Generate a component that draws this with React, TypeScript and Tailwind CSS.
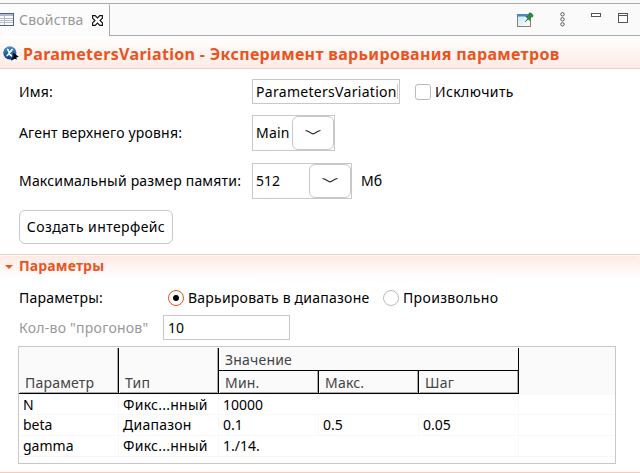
import type { ReactNode } from 'react';

function Arrow() {
  return (
    <div className="flex h-[34px] w-[42px] items-center justify-center rounded-[6px] border border-[#c8c8c8] bg-white">
      <svg width="16" height="8" viewBox="0 0 16 8" fill="none" stroke="#222" strokeWidth="1.1">
        <path d="M.5 1.5 Q3 2 5.5 3.7 Q8 6 10.5 3.7 Q13 2 15.5 1.5" />
      </svg>
    </div>
  );
}

function TabIcon() {
  return (
    <svg className="shrink-0" width="14" height="14" viewBox="0 0 14 14" shapeRendering="crispEdges">
      <rect x="-2" y="0.5" width="15.5" height="12" fill="#f8fafc" stroke="#50607f" />
      <rect x="0" y="1" width="13" height="2" fill="#a9b9d6" />
      <path d="M0 5.5H13M0 7.5H13M0 9.5H13M4.5 3V12" stroke="#b4bccb" fill="none" />
    </svg>
  );
}

function CloseIcon() {
  return (
    <svg className="shrink-0" width="11" height="11" viewBox="0 0 11 11" fill="#fff" stroke="#111" strokeWidth="1.1">
      <path d="M.6.6H3.2L5.5 3 7.8.6H10.4V3.2L8 5.5 10.4 7.8V10.4H7.8L5.5 8 3.2 10.4H.6V7.8L3 5.5.6 3.2Z" />
    </svg>
  );
}

function PinIcon() {
  return (
    <svg width="18" height="16" viewBox="0 0 18 16">
      <defs>
        <linearGradient id="pane" x1="0" y1="0" x2="1" y2="1">
          <stop offset="0" stopColor="#c5e4f7" />
          <stop offset="1" stopColor="#fff" />
        </linearGradient>
      </defs>
      <rect x="1.5" y="2.5" width="13" height="12" fill="url(#pane)" stroke="#8d8060" />
      <rect x="1" y="2" width="12" height="2.5" fill="#4b87c5" />
      <path d="M9.3 9.7 12 6.8" stroke="#333" strokeWidth="1" />
      <path d="M9.8 4.5 12 4.4 13.5 2.2 12.8 1.2 15 1 17 3.2 16.7 5 15.8 4.7 14 6.2 13.7 8.6Z" fill="#2c8b3c" stroke="#17612a" strokeWidth=".6" />
    </svg>
  );
}

function ExperimentIcon() {
  return (
    <svg className="mt-[4px] shrink-0" width="16" height="16" viewBox="0 0 16 16">
      <defs>
        <linearGradient id="ball" x1="0" y1="0" x2="0" y2="1">
          <stop offset="0" stopColor="#4b93cc" />
          <stop offset="1" stopColor="#063b7c" />
        </linearGradient>
      </defs>
      <circle cx="6.8" cy="6.8" r="6.6" fill="url(#ball)" />
      <path d="M4 3.3C6.3 3 6 10 9 9.8M9.7 3.3C7.5 3.5 6.5 9.5 3.5 9.8" fill="none" stroke="#fff" strokeWidth="1.7" />
      <path d="M10.2 6.8 15.8 10.8 13.2 11.6 14 13.4 11.8 12.8 8.4 14.5 7.8 13.7 10.6 11.2Z" fill="#000" />
    </svg>
  );
}

function ViewHeader() {
  return (
    <header className="h-9 bg-[#fafafa] pt-[3px]">
      <div className="flex h-[33px] border-t border-[#aaa]">
        <div className="flex w-[110px] items-center rounded-tr-[2px] border-r border-[#aaa] bg-[#fcfcfc]">
          <TabIcon />
          <span className="ml-[5px] w-[65px] text-[14px] tracking-[0.2px] text-[#999]">Свойства</span>
          <span className="ml-[8px]"><CloseIcon /></span>
        </div>
        <div className="flex flex-1 border-b border-[#aaa]">
          <div className="ml-[406px] pt-[8px]"><PinIcon /></div>
          <svg className="mt-[8px] ml-[25px]" width="7" height="15" viewBox="0 0 7 15" fill="#fff" stroke="#555">
            <circle cx="3.5" cy="2.3" r="1.7" /><circle cx="3.5" cy="7.3" r="1.7" /><circle cx="3.5" cy="12.3" r="1.7" />
          </svg>
          <div className="mt-[9px] ml-[25px] h-[4px] w-[10px] border border-[#555] bg-white" />
          <div className="mt-[9px] ml-[17px] h-[10px] w-[10px] border border-[#555] bg-white">
            <div className="h-[2px] border-b border-[#555]" />
          </div>
        </div>
      </div>
    </header>
  );
}

function Radio({ checked, children }: { checked?: boolean; children: ReactNode }) {
  return (
    <div className="flex items-center gap-[4px]">
      <span className={`flex h-4 w-4 items-center justify-center rounded-full border bg-white ${checked ? 'border-[#e95420]' : 'border-[#bbb]'}`}>
        {checked && <span className="h-[6px] w-[6px] rounded-full bg-black" />}
      </span>
      {children}
    </div>
  );
}

function HeadCell({ children }: { children: ReactNode }) {
  return (
    <div className="flex w-[100px] items-end border-r border-b border-black pl-px">
      <div className="flex h-full w-full items-end border-r border-b border-[#aaa] pl-[5px] leading-[18px]">{children}</div>
    </div>
  );
}

const rows = [
  ['N', 'Фикс...нный', '10000', '', ''],
  ['beta', 'Диапазон', '0.1', '0.5', '0.05'],
  ['gamma', 'Фикс...нный', '1./14.', '', ''],
];

function ParameterTable() {
  return (
    <div className="ml-[18px] mt-[6px] h-[118px] w-[598px] border border-[#c8c8c8] bg-white">
      <div className="flex h-[48px] bg-[#fafafa] pt-px tracking-[0.2px] text-[#444]">
        <div className="flex h-[46px]">
          <HeadCell>Параметр</HeadCell>
          <HeadCell>Тип</HeadCell>
          <div className="flex w-[300px] flex-col">
            <div className="h-[23px] border-r border-b border-black pl-[6px] leading-[23px]">Значение</div>
            <div className="flex h-[23px]">
              <HeadCell>Мин.</HeadCell>
              <HeadCell>Макс.</HeadCell>
              <HeadCell>Шаг</HeadCell>
            </div>
          </div>
        </div>
      </div>
      {rows.map((row, r) => (
        <div key={r} className={`flex border-b border-[#f8f8f8] leading-[20px] ${r === 0 ? 'h-[20px]' : 'h-[21px]'}`}>
          {row.map((cell, c) => {
            const divided = c < 2 || c === 4 || row[3] !== '';
            return (
              <div key={c} className={`w-[100px] border-r pl-[4px] ${divided ? 'border-[#f8f8f8]' : 'border-transparent'} ${c === 1 ? 'tracking-[0.25px]' : ''}`}>{cell}</div>
            );
          })}
        </div>
      ))}
    </div>
  );
}

export default function App() {
  return (
    <div className="h-[473px] w-[640px] overflow-hidden bg-white font-['Noto_Sans',sans-serif] text-[14px] leading-[20px] whitespace-nowrap text-black">
      <ViewHeader />
      <div className="flex h-[33px] items-center border-b border-[#f9c9bb] bg-linear-to-b from-white to-[#fdebe6] pl-[3px]">
        <ExperimentIcon />
        <h1 className="ml-[4px] pt-[3px] text-[16px] font-bold tracking-[0.33px] text-[#e95420]">ParametersVariation - Эксперимент варьирования параметров</h1>
      </div>
      <div className="h-[185px] pl-[19px] pt-[10px]">
        <div className="flex h-[25px] items-center">
          <span className="w-[233px] tracking-[0.2px]">Имя:</span>
          <div className="flex h-[25px] w-[148px] items-center overflow-hidden border border-[#c8c8c8] pl-[3px] tracking-[0.3px]">
            ParametersVariation
            <span className="h-[15px] w-px shrink-0 bg-[#ccc]" />
          </div>
          <span className="ml-[15px] h-4 w-4 rounded-[3px] border border-[#bbb]" />
          <span className="ml-[4px] tracking-[0.4px]">Исключить</span>
        </div>
        <div className="mt-[11px] flex h-[36px] items-center">
          <span className="w-[233px] tracking-[0.19px]">Агент верхнего уровня:</span>
          <div className="flex h-[36px] w-[83px] items-center justify-between border border-[#c8c8c8] pl-[3px]"><span className="tracking-[0.2px]">Main</span><Arrow /></div>
        </div>
        <div className="mt-[12px] flex h-[36px] items-center">
          <span className="w-[233px] tracking-[0.19px]">Максимальный размер памяти:</span>
          <div className="flex h-[36px] w-[100px] items-center justify-between border border-[#c8c8c8] pl-[3px]">512<Arrow /></div>
          <span className="ml-[9px]">Мб</span>
        </div>
        <button className="mt-[11px] flex h-[34px] w-[154px] items-center justify-center rounded-[6px] border border-[#c8c8c8] bg-white tracking-[0.4px]">Создать интерфейс</button>
      </div>
      <div className="border-t border-[#f9c9bb] pt-px">
        <div className="flex h-[22px] items-center rounded-t-[2px] bg-linear-to-b from-[#fdeae5] to-white pl-[5px] font-bold text-[#e95420]">
          <svg width="8" height="4" viewBox="0 0 8 4"><path d="M0 0H8L4 4Z" fill="#e95420" /></svg>
          <h2 className="ml-[6px] pb-[2px] tracking-[0.15px]">Параметры</h2>
        </div>
      </div>
      <div className="mt-[10px] flex h-[20px] items-center pl-[19px]">
        <span className="w-[149px] tracking-[0.2px]">Параметры:</span>
        <Radio checked><span className="w-[181px] tracking-[0.23px]">Варьировать в диапазоне</span></Radio>
        <span className="w-[14px]" />
        <Radio><span className="tracking-[0.35px]">Произвольно</span></Radio>
      </div>
      <div className="mt-[7px] flex h-[25px] items-center pl-[19px]">
        <span className="w-[144px] tracking-[0.25px] text-[#999]">Кол-во "прогонов"</span>
        <div className="flex h-[25px] w-[127px] items-center border border-[#c8c8c8] pl-[4px]">10</div>
      </div>
      <ParameterTable />
      <div className="mt-[8px] h-px bg-[#f9c9bb]" />
    </div>
  );
}
